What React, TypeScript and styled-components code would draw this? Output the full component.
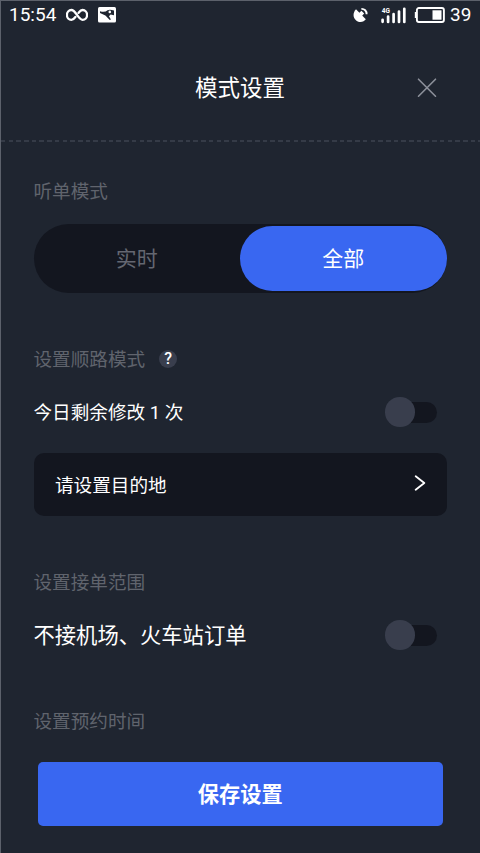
import React, { useState } from 'react';
import styled, { createGlobalStyle } from 'styled-components';

const Global = createGlobalStyle`
  * { box-sizing: border-box; }
  html, body { margin: 0; background: #1f2530; }
  body { font-family: Roboto, "Noto Sans CJK SC", sans-serif; color: #fff; }
  button { font: inherit; color: inherit; border: 0; padding: 0; background: none; }
`;

const Screen = styled.main`
  width: 480px;
  height: 853px;
  overflow: hidden;
  display: flex;
  flex-direction: column;
  background: #1f2530;
  border-top: 1px solid #5c616b;
  border-left: 1px solid #5c616b;
`;

const StatusBar = styled.div`
  height: 30px;
  flex: none;
  display: flex;
  align-items: center;
  justify-content: space-between;
  padding: 0 9px 2px 8px;
`;

const StatusGroup = styled.div`
  display: flex;
  align-items: center;
  height: 28px;
  svg { display: block; flex: none; }
`;

const StatusText = styled.span<{ $width: number }>`
  width: ${p => p.$width}px;
  font-size: 19px;
  line-height: 28px;
  white-space: nowrap;
`;

const Header = styled.header`
  height: 109px;
  flex: none;
  display: grid;
  grid-template-columns: 1fr 90px 1fr;
  align-items: center;
  padding: 4px 1px 0 0;
`;

const Title = styled.h1`
  grid-column: 2;
  margin: 0;
  font-size: 22.5px;
  font-weight: 400;
  line-height: 32px;
  white-space: nowrap;
`;

const CloseButton = styled.button`
  justify-self: end;
  width: 20px;
  height: 20px;
  margin-right: 42.5px;
  svg { display: block; }
`;

const Divider = styled.div`
  height: 2px;
  flex: none;
  background: repeating-linear-gradient(90deg, #353b47 0 4.5px, transparent 4.5px 7.7px);
`;

const Content = styled.div`
  height: 590px;
  flex: none;
  padding: 36px 33px 0 32.5px;
`;

const Section = styled.section<{ $height: number }>`
  height: ${p => p.$height}px;
`;

const Label = styled.h2`
  margin: 0;
  height: 28px;
  display: flex;
  align-items: center;
  gap: 14px;
  font-size: 18.6px;
  line-height: 28px;
  font-weight: 400;
  color: #60646d;
`;

const Help = styled.button`
  width: 18px;
  height: 18px;
  margin-top: -3px;
  border-radius: 50%;
  background: #393e4d;
  color: #fff;
  font-size: 16px;
  font-weight: 500;
  line-height: 18px;
  text-align: center;
`;

const Segmented = styled.div`
  width: 413px;
  height: 69px;
  margin-top: 18px;
  padding: 2px 0;
  display: grid;
  grid-template-columns: 1fr 1fr;
  border-radius: 35px;
  background: #13161f;
`;

const Segment = styled.button<{ $active: boolean }>`
  height: 65px;
  padding-bottom: 3px;
  border-radius: 33px;
  background: ${p => (p.$active ? '#3967f1' : 'transparent')};
  color: ${p => (p.$active ? '#fff' : '#646771')};
  font-size: 21px;
`;

const Row = styled.div`
  height: 30px;
  margin-top: 23px;
  display: flex;
  align-items: center;
  justify-content: space-between;
  padding-right: 10px;
`;

const RowText = styled.span<{ $size: number }>`
  padding-top: 2px;
  font-size: ${p => p.$size}px;
  line-height: 30px;
  white-space: pre;
`;

const Switch = styled.button`
  width: 52px;
  height: 30px;
  display: grid;
  align-items: center;
`;

const Track = styled.span`
  grid-area: 1 / 1;
  height: 21px;
  margin-left: 8px;
  border-radius: 11px;
  background: #13161f;
`;

const Thumb = styled.span<{ $on: boolean }>`
  grid-area: 1 / 1;
  justify-self: ${p => (p.$on ? 'end' : 'start')};
  width: 29.5px;
  height: 29.5px;
  border-radius: 50%;
  background: ${p => (p.$on ? '#3967f1' : '#393e4d')};
`;

const Destination = styled.button`
  width: 413px;
  height: 63px;
  margin-top: 26px;
  padding: 0 21px 3px 21.5px;
  display: flex;
  align-items: center;
  justify-content: space-between;
  border-radius: 10px;
  background: #13161f;
  font-size: 18.6px;
  svg { margin-bottom: 1px; }
`;

const Footer = styled.footer`
  padding: 30px 37px 0 36.5px;
`;

const SaveButton = styled.button`
  display: block;
  width: 405.5px;
  height: 64px;
  padding-bottom: 3px;
  border-radius: 5px;
  background: #3967f1;
  font-size: 21.2px;
  font-weight: 700;
`;

function Toggle({ label }: { label: string }) {
  const [on, setOn] = useState(false);
  return (
    <Switch role="switch" aria-label={label} aria-checked={on} onClick={() => setOn(!on)}>
      <Track />
      <Thumb $on={on} />
    </Switch>
  );
}

function InfinityIcon() {
  return (
    <svg width="22" height="14" viewBox="0 0 22 14" fill="none" stroke="#fff" strokeWidth="2.3" strokeLinecap="round">
      <path d="M12.6 4.8C14 3 15 2 16.6 2a4.4 4.8 0 0 1 0 9.8c-4.4 0-6.8-9.8-11.2-9.8a4.4 4.8 0 0 0 0 9.8c1.7 0 2.7-1 4-2.8" />
    </svg>
  );
}

function PictureIcon() {
  return (
    <svg width="18" height="16" viewBox="0 0 18 16">
      <rect width="18" height="15.5" rx="1.5" fill="#fff" />
      <path d="M2 4.2Q7 5.8 9.5 3.2Q12 2 16 3.6V8.2L12.6 7.6 11 9.2 12.9 12.6 11.8 13 7.4 8.6 2 5.9Z" fill="#1f2530" />
      <circle cx="11.8" cy="4.9" r="1.3" fill="#fff" />
    </svg>
  );
}

function SatelliteIcon() {
  return (
    <svg width="16" height="16" viewBox="0 0 16 16">
      <path d="M3 2.2 12.8 12.3C11 14.9 6.6 16.2 3.2 13.4-.4 10.4-.2 5.4 3 2.2Z" fill="#fff" />
      <path d="m6 9 3.8-3.8" stroke="#fff" strokeWidth="4" />
      <path d="M8.4 1.9c3.2-.1 5.2 2 5.2 5.3" fill="none" stroke="#fff" strokeWidth="1.9" />
    </svg>
  );
}

function SignalIcon() {
  return (
    <svg width="25" height="17" viewBox="0 0 25 17">
      <text x="0.8" y="6.2" fontFamily="Roboto" fontSize="6.5" fontWeight="700" fill="#fff">4G</text>
      <g stroke="#fff" strokeWidth="2.7" strokeLinecap="round">
        <path d="M1.6 12.8v2M7.1 9.6v5.3M12.6 7.2v7.7M18 4.5v10.4M23.3 1.8v13.1" />
      </g>
    </svg>
  );
}

function BatteryIcon() {
  return (
    <svg width="31" height="16" viewBox="0 0 31 16">
      <path d="M3 5H.8v6H3" fill="#fff" />
      <rect x="2.9" y="1" width="27" height="14" rx="2" fill="none" stroke="#fff" strokeWidth="1.9" />
      <rect x="18.5" y="3.3" width="9" height="9.4" fill="#fff" />
    </svg>
  );
}

export default function App() {
  const [mode, setMode] = useState('全部');
  return (
    <>
      <Global />
      <Screen>
        <StatusBar>
          <StatusGroup>
            <StatusText $width={57}>15:54</StatusText>
            <InfinityIcon />
            <svg width="10" height="1" />
            <PictureIcon />
          </StatusGroup>
          <StatusGroup>
            <SatelliteIcon />
            <svg width="12" height="1" />
            <SignalIcon />
            <svg width="8" height="1" />
            <BatteryIcon />
            <svg width="5" height="1" />
            <StatusText $width={21}>39</StatusText>
          </StatusGroup>
        </StatusBar>

        <Header>
          <Title>模式设置</Title>
          <CloseButton aria-label="关闭">
            <svg width="20" height="20" viewBox="0 0 20 20" stroke="#8c909a" strokeWidth="1.6" strokeLinecap="round">
              <path d="m1.5 1.2 17 17m0-17-17 17" />
            </svg>
          </CloseButton>
        </Header>
        <Divider />

        <Content>
          <Section $height={168}>
            <Label>听单模式</Label>
            <Segmented>
              {['实时', '全部'].map(name => (
                <Segment key={name} $active={mode === name} onClick={() => setMode(name)}>{name}</Segment>
              ))}
            </Segmented>
          </Section>

          <Section $height={223}>
            <Label>设置顺路模式<Help aria-label="帮助">?</Help></Label>
            <Row>
              <RowText $size={18.6}>今日剩余修改 1 次</RowText>
              <Toggle label="顺路模式" />
            </Row>
            <Destination>
              请设置目的地
              <svg width="12" height="16" viewBox="0 0 12 16" fill="none" stroke="#fff" strokeWidth="1.8" strokeLinecap="round" strokeLinejoin="round">
                <path d="m1.7 1.2 8.6 6.8-8.6 6.8" />
              </svg>
            </Destination>
          </Section>

          <Section $height={139}>
            <Label>设置接单范围</Label>
            <Row>
              <RowText $size={21.3}>不接机场、火车站订单</RowText>
              <Toggle label="不接机场、火车站订单" />
            </Row>
          </Section>

          <Section $height={28}>
            <Label>设置预约时间</Label>
          </Section>
        </Content>

        <Footer>
          <SaveButton>保存设置</SaveButton>
        </Footer>
      </Screen>
    </>
  );
}
